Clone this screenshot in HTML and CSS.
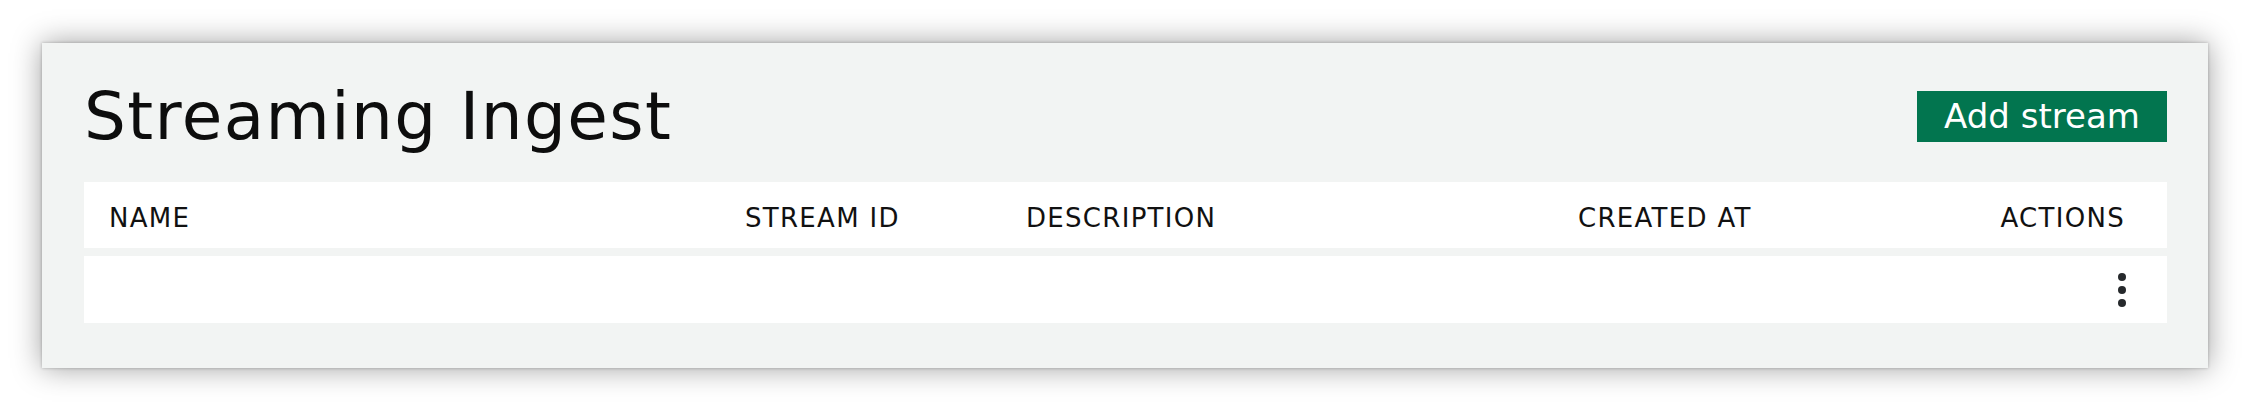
FILE: index.html
```html
<!DOCTYPE html>
<html lang="en">
<head>
<meta charset="utf-8">
<title>Streaming Ingest</title>
<link rel="stylesheet" href="styles.css">
</head>
<body>
<div class="page">
  <section class="panel">
    <header class="panel-head">
      <h1 class="title">Streaming Ingest</h1>
      <button class="btn-add" type="button">Add stream</button>
    </header>
    <div class="table">
      <div class="row row-head">
        <div class="cell">NAME</div>
        <div class="cell">STREAM ID</div>
        <div class="cell">DESCRIPTION</div>
        <div class="cell">CREATED AT</div>
        <div class="cell cell-actions">ACTIONS</div>
      </div>
      <div class="row row-data">
        <div class="cell"></div>
        <div class="cell"></div>
        <div class="cell"></div>
        <div class="cell"></div>
        <div class="cell cell-actions">
          <span class="kebab" aria-label="More actions">
            <span class="dot"></span><span class="dot"></span><span class="dot"></span>
          </span>
        </div>
      </div>
    </div>
  </section>
</div>
</body>
</html>
```
FILE: styles.css
```css
html, body {
  margin: 0;
  padding: 0;
  background: #ffffff;
}

body {
  font-family: "DejaVu Sans", "Liberation Sans", sans-serif;
  color: #111111;
}

.page {
  padding: 43px 43px 42px 42px;
}

.panel {
  background: #f2f4f3;
  box-shadow: 0 0 3px rgba(0, 0, 0, 0.25), 0 0 28px rgba(0, 0, 0, 0.38);
  padding: 48px 41px 45px 42px;
}

.panel-head {
  display: flex;
  align-items: center;
  justify-content: space-between;
  height: 51px;
  margin-bottom: 40px;
}

.title {
  margin: 0;
  font-size: 66px;
  font-weight: 400;
  line-height: 51px;
  letter-spacing: 1.4px;
  color: #0d0d0d;
}

.btn-add {
  width: 250px;
  height: 51px;
  border: 0;
  border-radius: 0;
  background: #02754f;
  color: #ffffff;
  font-family: inherit;
  font-size: 34px;
  line-height: 51px;
  padding: 0 0 2px 0;
  cursor: pointer;
}

.table {
  display: flex;
  flex-direction: column;
  gap: 8px;
}

.row {
  display: grid;
  grid-template-columns: 636px 281px 552px 1fr auto;
  align-items: center;
  background: #ffffff;
  padding: 0 42px 0 25px;
}

.row-head {
  height: 66px;
}

.row-head .cell {
  font-size: 26px;
  letter-spacing: 1.3px;
  padding-top: 5px;
  color: #111111;
}

.row-data {
  height: 67px;
}

.cell-actions {
  justify-self: end;
}

.kebab {
  display: flex;
  flex-direction: column;
  align-items: center;
  gap: 5px;
  width: 8px;
  margin-right: -1px;
}

.dot {
  width: 8px;
  height: 8px;
  border-radius: 50%;
  background: #26292c;
}
```
